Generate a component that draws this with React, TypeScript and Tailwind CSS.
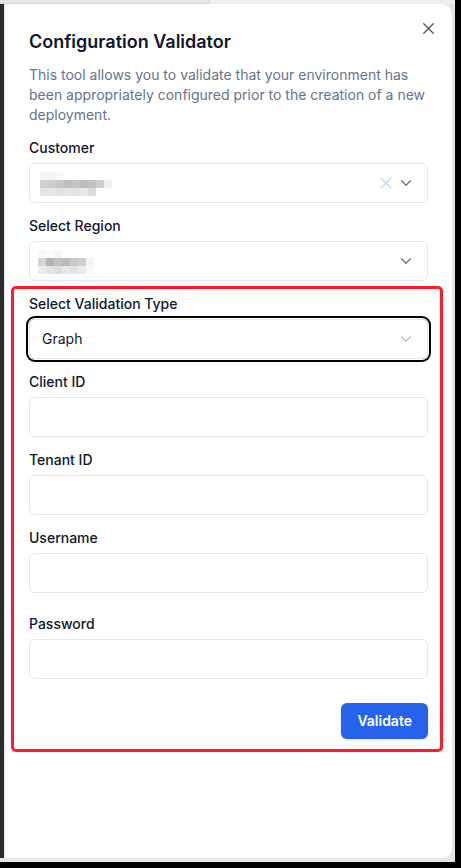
import { ChevronDown, X } from "lucide-react";

const font = { fontFamily: "Inter, 'Noto Sans', sans-serif" };

// blurred (pixelated) values, one class per block
const customerBlur = [
  ["bg-[#f4f4f4]", "bg-[#f2f2f2]", "bg-[#f9f9f9]", "bg-white", "bg-white", "bg-white", "bg-white", "bg-white", "bg-white"],
  ["bg-[#d0d0d0]", "bg-[#cdcdcd]", "bg-[#c6c6c6]", "bg-[#bfbfbf]", "bg-[#c4c4c4]", "bg-[#bdbdbd]", "bg-[#c3c3c3]", "bg-[#cdcdcd]", "bg-[#f0f0f0]"],
  ["bg-[#e4e4e4]", "bg-[#e8e8e8]", "bg-[#e1e1e1]", "bg-[#e6e6e6]", "bg-[#e3e3e3]", "bg-[#e9e9e9]", "bg-[#dcdcdc]", "bg-white", "bg-white"],
];

const regionBlur = [
  ["bg-[#f6f6f6]", "bg-[#fbfbfb]", "bg-[#f5f5f5]", "bg-white", "bg-white", "bg-white", "bg-white"],
  ["bg-[#d4d4d4]", "bg-[#b5b5b5]", "bg-[#c2c2c2]", "bg-[#bcbcbc]", "bg-[#c8c8c8]", "bg-[#cfcfcf]", "bg-[#f3f3f3]"],
  ["bg-[#ececec]", "bg-[#e5e5e5]", "bg-[#dedede]", "bg-[#e8e8e8]", "bg-[#e3e3e3]", "bg-[#ebebeb]", "bg-[#f8f8f8]"],
];

const Blur = ({ rows }: { rows: string[][] }) => (
  <div className="flex flex-col">
    {rows.map((row, i) => (
      <div key={i} className="flex">
        {row.map((c, j) => (
          <div key={j} className={`h-2 w-2 ${c}`} />
        ))}
      </div>
    ))}
  </div>
);

const Label = ({ children }: { children: string }) => (
  <label className="block text-sm font-medium leading-none text-[#0f172a]">{children}</label>
);

const TextField = ({ label, type = "text", className = "" }: { label: string; type?: string; className?: string }) => (
  <div className={`flex flex-col gap-2 ${className}`}>
    <Label>{label}</Label>
    <input
      type={type}
      className="h-10 w-full rounded-md border border-[#e2e8f0] bg-white px-3 text-sm outline-none"
    />
  </div>
);

export default function App() {
  return (
    <div className="relative flex h-[868px] w-[461px] bg-black" style={font}>
      <div className="flex h-[862px] w-[455px] flex-col">
        <div className="flex h-[4px] bg-[#efefef]">
          <div className="w-[210px] border-b border-[#d6d6d6] bg-[#e4e4e4]" />
        </div>

        <div className="flex flex-1 bg-[#e4e4e4]">
          <div className="w-[4px] bg-[#2b2b2b]" />

          <div className="relative w-[448px] rounded-r-[10px] border-l border-[#dbe4f0] bg-white pl-6 pr-6 pt-6">
            <button className="absolute right-[14px] top-[15px] text-[#4b5563]">
              <X size={19} strokeWidth={1.6} />
            </button>

            <h2 className="text-lg font-semibold leading-7 text-[#0f172a]">Configuration Validator</h2>
            <p className="mt-[9px] text-sm leading-5 text-[#64748b]">
              This tool allows you to validate that your environment has been appropriately configured prior to the
              creation of a new deployment.
            </p>

            <div className="mt-4 flex flex-col gap-4">
              <div className="flex flex-col gap-2">
                <Label>Customer</Label>
                <div className="flex h-10 items-center rounded-md border border-[#e2e8f0] pl-[10px] pr-3">
                  <div className="flex-1 pt-[1px]">
                    <Blur rows={customerBlur} />
                  </div>
                  <X size={20} strokeWidth={1.4} className="mr-[1px] text-[#b7d3f5]" />
                  <ChevronDown size={18} strokeWidth={1.7} className="text-[#6b7280]" />
                </div>
              </div>

              <div className="flex flex-col gap-2">
                <Label>Select Region</Label>
                <div className="flex h-10 items-center rounded-md border border-[#e2e8f0] pl-2 pr-3">
                  <div className="flex-1 pt-[1px]">
                    <Blur rows={regionBlur} />
                  </div>
                  <ChevronDown size={18} strokeWidth={1.7} className="text-[#6b7280]" />
                </div>
              </div>

              <div className="flex flex-col gap-2">
                <Label>Select Validation Type</Label>
                <div className="flex h-10 items-center rounded-md border border-[#e2e8f0] pl-3 pr-3 ring-2 ring-black ring-offset-1">
                  <span className="flex-1 text-sm text-[#0f172a]">Graph</span>
                  <ChevronDown size={18} strokeWidth={1.4} className="text-[#9ca3af]" />
                </div>
              </div>

              <TextField label="Client ID" />
              <TextField label="Tenant ID" />
              <TextField label="Username" />
              <TextField label="Password" type="password" className="mt-2" />

              <div className="mt-2 flex justify-end">
                <button className="h-9 rounded-md bg-[#2563eb] px-4 text-sm font-semibold text-white shadow-sm">
                  Validate
                </button>
              </div>
            </div>
          </div>

          <div className="w-[3px]" />
        </div>

        <div className="h-[4px] bg-[#e6e6e6]" />
      </div>

      <div className="pointer-events-none absolute left-[11px] top-[286px] h-[466px] w-[432px] rounded-[5px] border-[3px] border-[#ff1a2e]" />
    </div>
  );
}
